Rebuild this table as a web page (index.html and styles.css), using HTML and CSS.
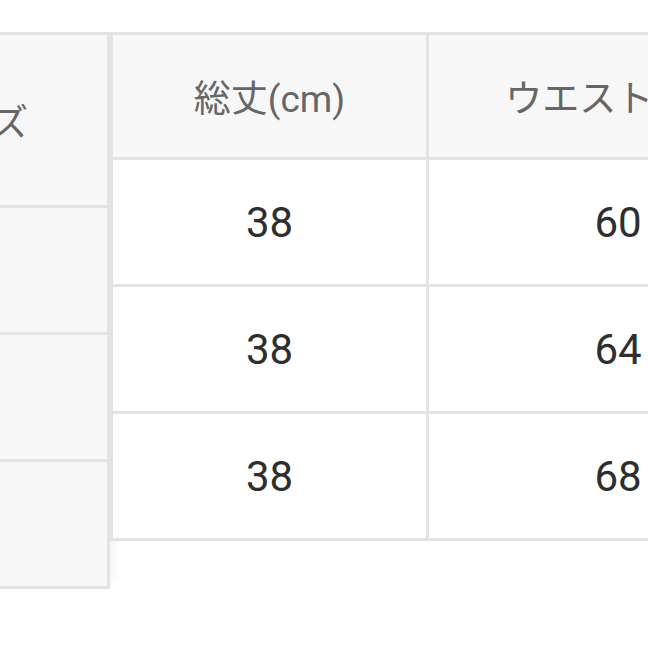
FILE: index.html
```html
<!DOCTYPE html>
<html lang="ja">
<head>
<meta charset="utf-8">
<link rel="stylesheet" href="styles.css">
</head>
<body>
<div class="wrap">
  <div class="side">
    <div class="side-cell side-head">サイズ</div>
    <div class="side-cell">S</div>
    <div class="side-cell">M</div>
    <div class="side-cell">L</div>
  </div>
  <div class="grid">
    <div class="cell head">総丈(cm)</div>
    <div class="cell head">ウエスト(cm)</div>
    <div class="cell num">38</div>
    <div class="cell num">60</div>
    <div class="cell num">38</div>
    <div class="cell num">64</div>
    <div class="cell num">38</div>
    <div class="cell num">68</div>
  </div>
</div>
</body>
</html>
```
FILE: styles.css
```css
html, body {
  margin: 0;
  padding: 0;
  background: #ffffff;
  overflow: hidden;
  width: 648px;
  height: 648px;
}
.wrap {
  display: flex;
  align-items: flex-start;
  padding-top: 32px;
  margin-left: -164px;
  font-family: Roboto, "Noto Sans CJK JP", sans-serif;
}
.side {
  flex: none;
  width: 268px;
  border: 3px solid #e3e3e3;
  border-bottom: none;
  background: #f7f7f7;
  box-shadow: 8px 0 10px -6px rgba(0,0,0,0.07);
}
.side-cell {
  height: 124px;
  border-bottom: 3px solid #e3e3e3;
  display: flex;
  align-items: center;
  justify-content: center;
  font-size: 42px;
  color: #2e2e2e;
}
.side-head {
  height: 170px;
  font-size: 37px;
  color: #666666;
}
.grid {
  flex: none;
  display: grid;
  grid-template-columns: 316px 381px;
  grid-template-rows: 125px 127px 127px 127px;
  border-top: 3px solid #e3e3e3;
  border-left: 3px solid #e3e3e3;
  position: relative;
}
.cell {
  border-right: 3px solid #e3e3e3;
  border-bottom: 3px solid #e3e3e3;
  display: flex;
  align-items: center;
  justify-content: center;
  background: #ffffff;
}
.head {
  background: #f7f7f7;
  font-size: 37px;
  color: #666666;
}
.num {
  font-size: 42px;
  color: #2e2e2e;
}
```
